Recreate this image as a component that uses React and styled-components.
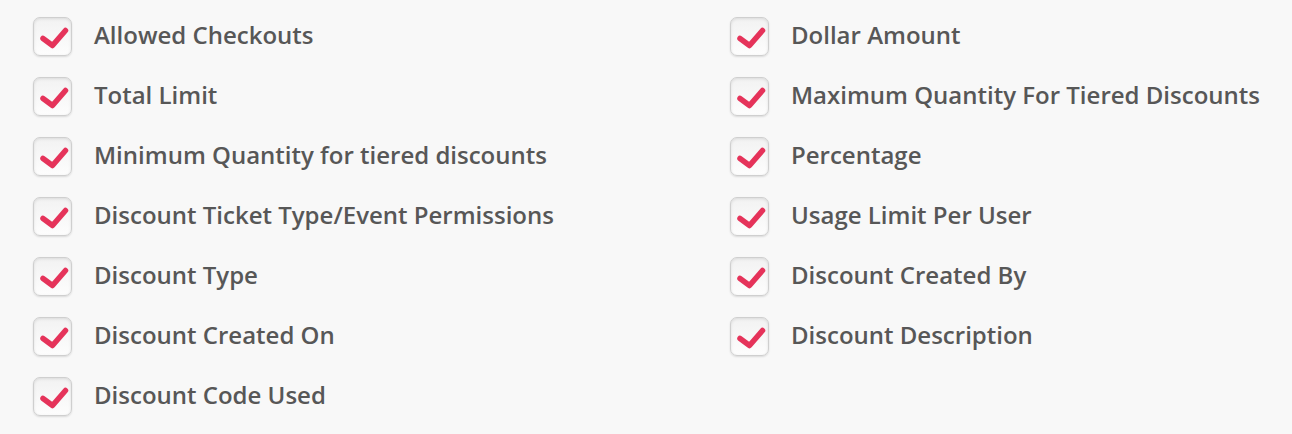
import React from 'react'
import styled, { createGlobalStyle } from 'styled-components'

const GlobalStyle = createGlobalStyle`
  html, body {
    margin: 0;
    padding: 0;
    background: #f8f8f8;
  }
  body {
    font-family: "Open Sans", "Liberation Sans", sans-serif;
  }
`;

const Wrapper = styled.div`
  display: grid;
  grid-template-columns: 697px 1fr;
  padding: 6px 0 0 33px;
`;

const Column = styled.ul`
  list-style: none;
  margin: 0;
  padding: 0;
  display: flex;
  flex-direction: column;
`;

const Row = styled.li`
  display: flex;
  align-items: center;
  height: 60px;
  gap: 22px;
  font-size: 24px;
  font-weight: 600;
  color: #575757;
  span.label {
    margin-top: -3px;
  }
`;

const Box = styled.span`
  width: 39px;
  height: 39px;
  box-sizing: border-box;
  border: 1px solid #cfcfcf;
  border-radius: 7px;
  background: linear-gradient(#f2f2f2, #fdfdfd);
  box-shadow: inset 0 1px 3px rgba(0, 0, 0, 0.1), 0 1px 2px rgba(0, 0, 0, 0.12);
  flex-shrink: 0;
  svg {
    display: block;
  }
`;

const Check = () => (
  <svg width="37" height="37" viewBox="0 0 37 37">
    <path
      d="M9 20.5 L18.5 27.5 L31.5 12.5"
      fill="none"
      stroke="#e5335a"
      strokeWidth="5.5"
      strokeLinecap="round"
      strokeLinejoin="round"
    />
  </svg>
);

const left = [
  'Allowed Checkouts',
  'Total Limit',
  'Minimum Quantity for tiered discounts',
  'Discount Ticket Type/Event Permissions',
  'Discount Type',
  'Discount Created On',
  'Discount Code Used',
];

const right = [
  'Dollar Amount',
  'Maximum Quantity For Tiered Discounts',
  'Percentage',
  'Usage Limit Per User',
  'Discount Created By',
  'Discount Description',
];

const Item = ({ label }) => (
  <Row>
    <Box>
      <Check />
    </Box>
    <span className="label">{label}</span>
  </Row>
);

export default function App() {
  return (
    <>
      <GlobalStyle />
      <Wrapper>
        <Column>
          {left.map((l) => (
            <Item key={l} label={l} />
          ))}
        </Column>
        <Column>
          {right.map((l) => (
            <Item key={l} label={l} />
          ))}
        </Column>
      </Wrapper>
    </>
  );
}
